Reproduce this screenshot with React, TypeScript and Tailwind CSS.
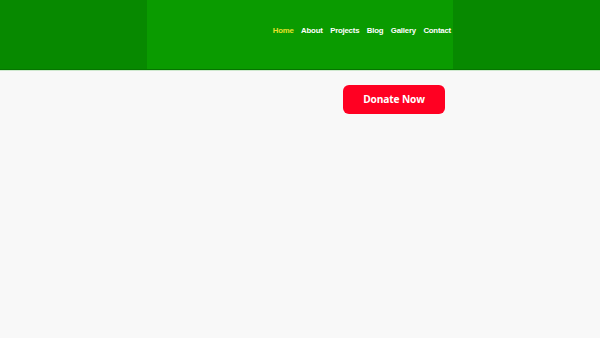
import React from 'react';

const links = ['Home', 'About', 'Projects', 'Blog', 'Gallery', 'Contact'];

const App: React.FC = () => {
  return (
    <div className="min-h-[338px] w-full bg-[#f8f8f8]" style={{ fontFamily: '"Liberation Sans", Arial, sans-serif' }}>
      {/* Header */}
      <header className="bg-[#078900] border-b border-[#067500]">
        <div className="mx-auto flex h-[69px] w-[306px] items-center justify-end bg-[#0a9b00] pr-[2px] pb-[8px]">
          <nav className="flex items-center gap-[7.5px]">
            {links.map((link, i) => (
              <a
                key={link}
                href="#"
                className={`text-[7.8px] font-bold tracking-[-0.2px] ${i === 0 ? 'text-[#e6e22a]' : 'text-white'}`}
              >
                {link}
              </a>
            ))}
          </nav>
        </div>
      </header>
      <div className="h-px bg-[#cfe9cf]" />

      {/* Donate */}
      <div className="mx-auto flex w-[306px] justify-end pr-[8px] pt-[14px]">
        <button
          className="flex h-[29px] w-[102px] items-center justify-center rounded-[6px] bg-[#ff0022] pt-px text-[10.2px] font-bold tracking-[-0.15px] text-white"
          style={{ fontFamily: '"Open Sans", sans-serif' }}
        >
          Donate Now
        </button>
      </div>
    </div>
  );
};

export default App;
